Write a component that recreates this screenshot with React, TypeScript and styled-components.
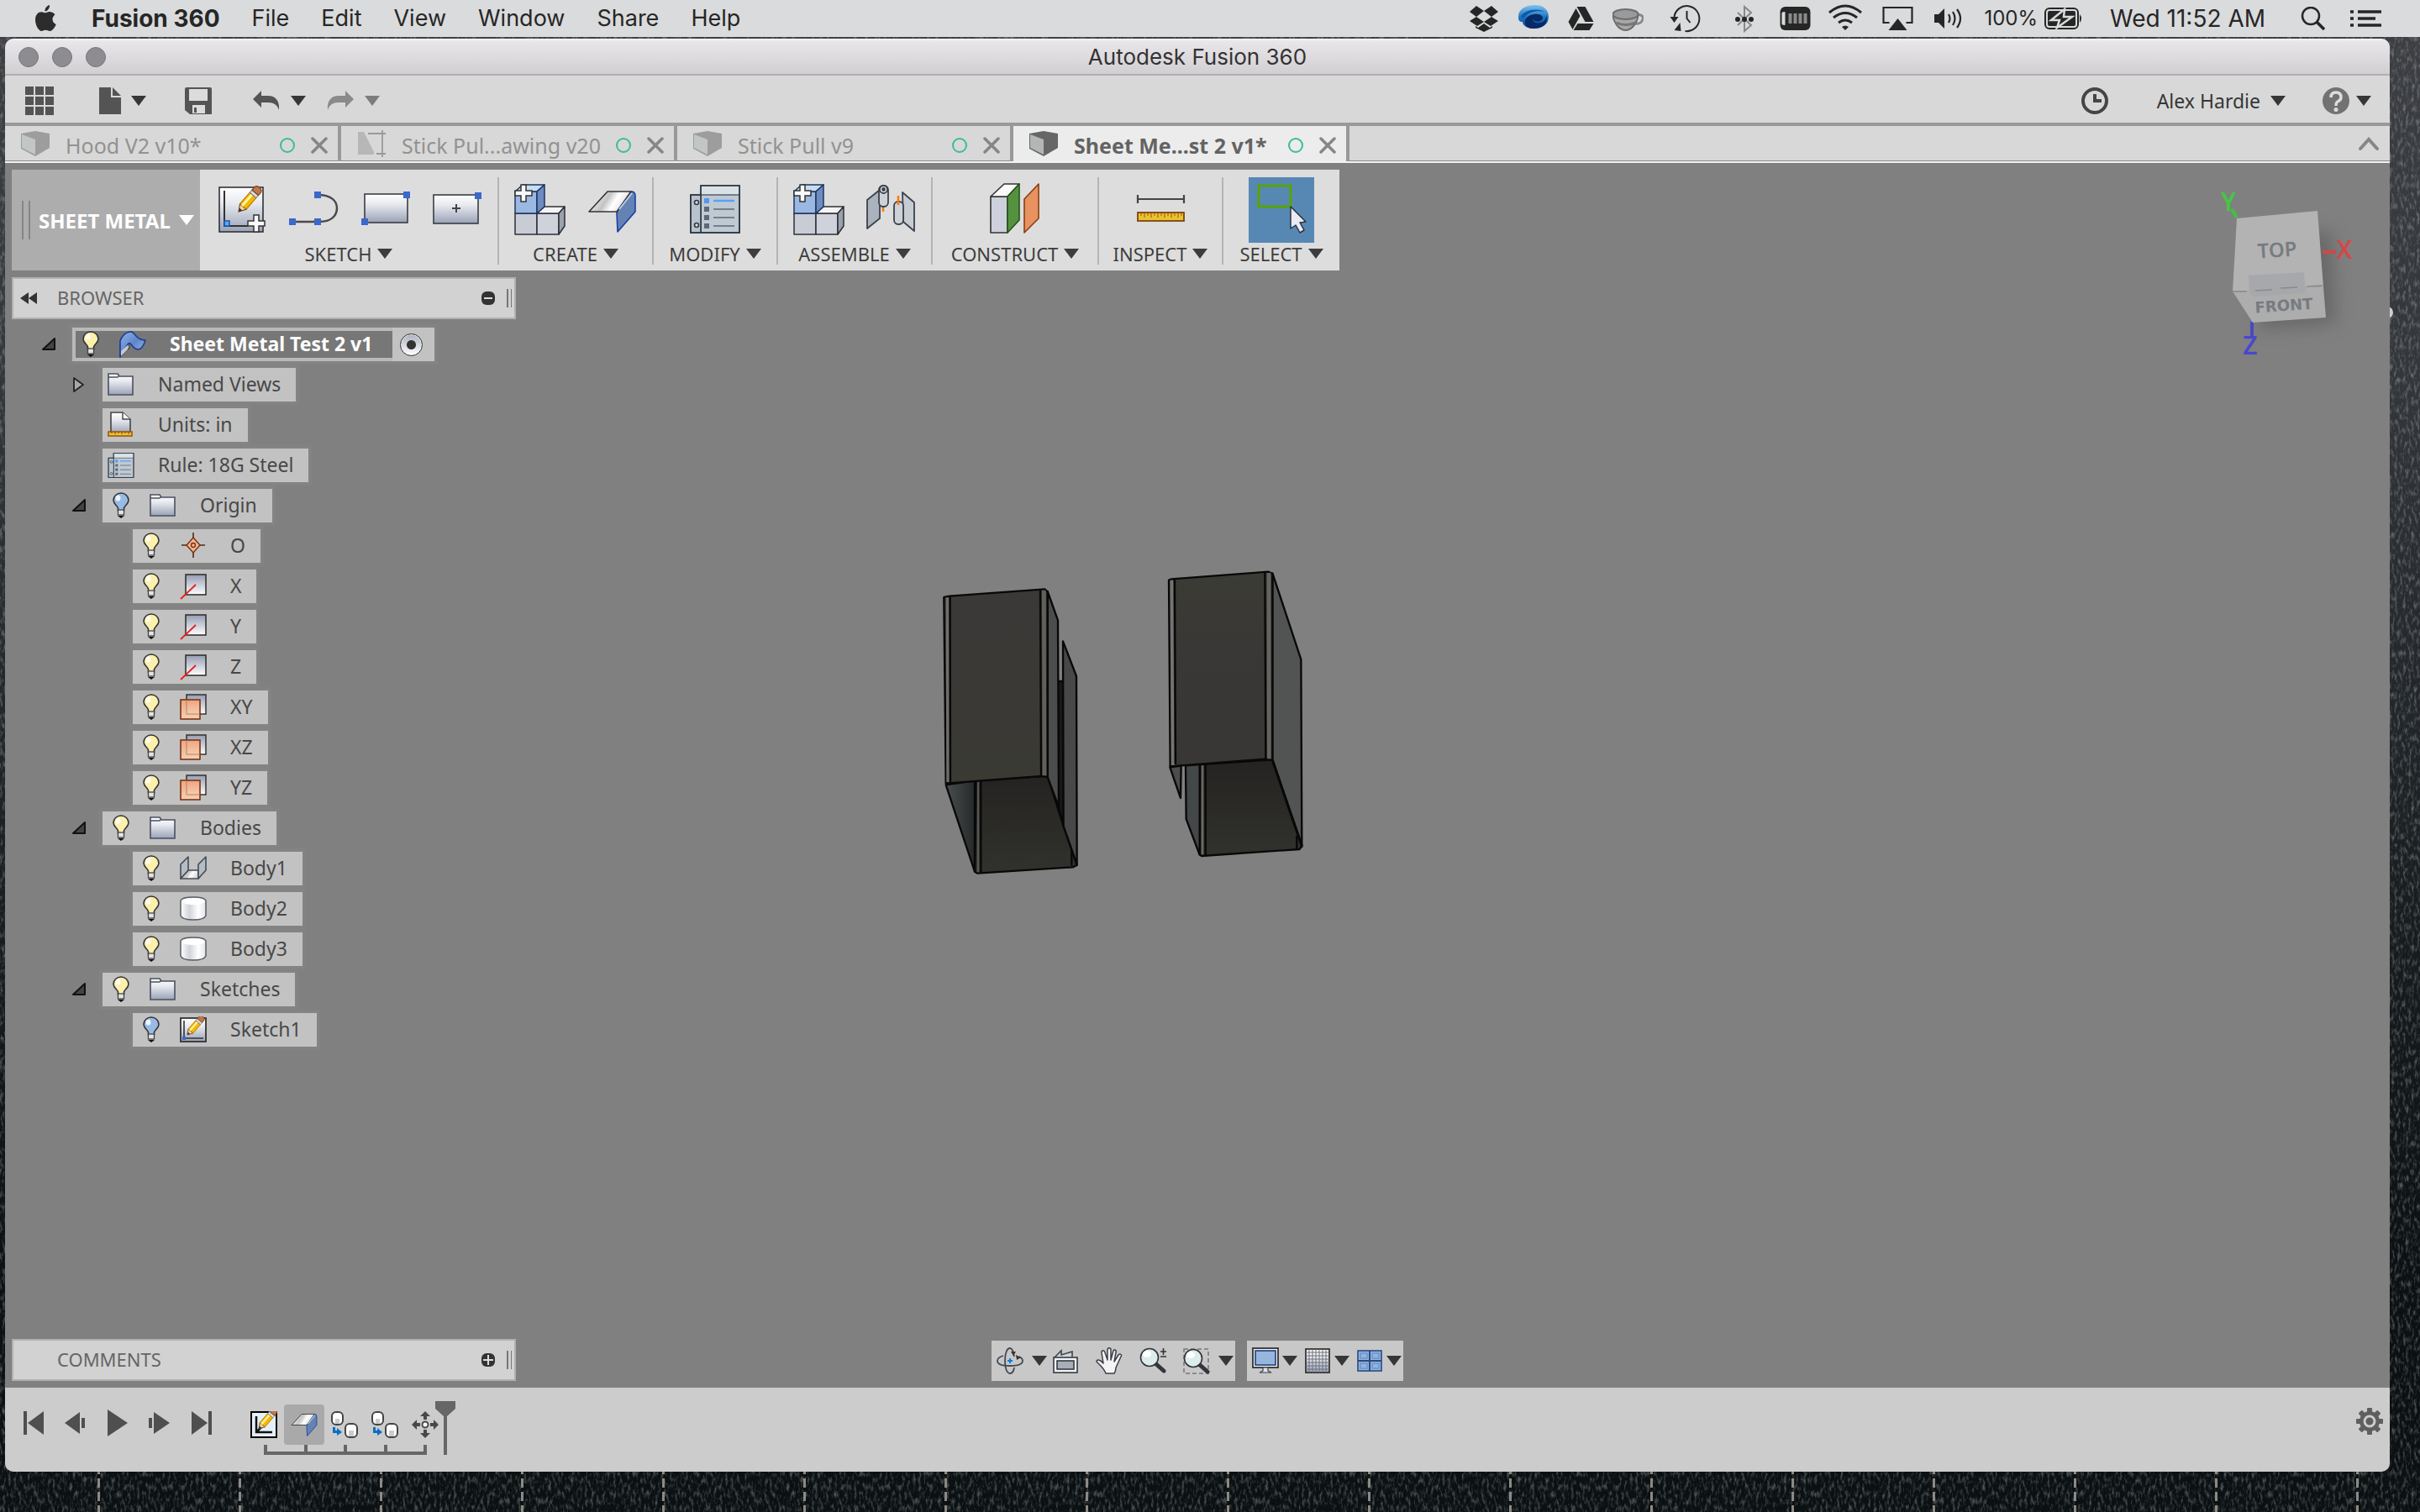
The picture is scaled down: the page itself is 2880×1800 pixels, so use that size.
import React from "react";
import styled, { createGlobalStyle, css } from "styled-components";

const uiFont = `"Noto Sans", "Open Sans", sans-serif`;
const systemFont = `Inter, Roboto, sans-serif`;

const GlobalStyle = createGlobalStyle`
  * { box-sizing: border-box; }
  html, body { margin: 0; }
  body { background: #14191c; font-family: ${uiFont}; font-size: 22px; color: #444; }
  button { appearance: none; border: 0; margin: 0; padding: 0; background: none; color: inherit; font: inherit; cursor: pointer; }
  svg { display: block; flex: none; }
`;

/* ---------- desktop ---------- */

const Desktop = styled.div`
  position: relative;
  isolation: isolate;
  display: flex;
  flex-direction: column;
  min-height: 100vh;
  background: linear-gradient(#3d3f43, #33363a 25%, #181d20 60%, #0b1013 85%);
`;

const Denim = styled.svg`
  position: absolute;
  inset: 0;
  z-index: -1;
  width: 100%;
  height: 100%;
`;

const MenuBar = styled.header`
  display: flex;
  align-items: center;
  height: 44px;
  padding: 0 46px 0 42px;
  background: #dadbdc;
  color: #262626;
  font: 27px/44px ${systemFont};
`;

const MenuList = styled.nav`
  display: flex;
  gap: 38px;
  margin-left: 42px;
`;

const MenuItem = styled.button<{ $bold?: boolean }>`
  font-weight: ${(p) => (p.$bold ? 700 : 400)};
  font-size: ${(p) => (p.$bold ? 28 : 27)}px;
`;

const StatusArea = styled.div`
  display: flex;
  align-items: center;
  gap: 20px;
  margin-left: auto;
`;

const BatteryStatus = styled.div`
  display: flex;
  align-items: center;
  gap: 8px;
  margin: 0 12px 0 6px;
  font-size: 24px;
`;

const Clock = styled.time`
  margin-right: 22px;
  font-size: 28px;
`;

const WindowFrame = styled.main`
  display: flex;
  flex: 1;
  flex-direction: column;
  margin: 2px 36px 48px 6px;
  border-radius: 10px;
  background: #808080;
  overflow: hidden;
`;

const DesktopKnob = styled.div`
  position: absolute;
  z-index: -1;
  top: 365px;
  right: 32px;
  width: 14px;
  height: 14px;
  border-radius: 50%;
  background: #d0d0d0;
`;

/* ---------- title bar and quick toolbar ---------- */

const TitleBar = styled.div`
  display: grid;
  grid-template-columns: 1fr auto 1fr;
  align-items: center;
  height: 44px;
  padding: 2px 16px 0;
  border-bottom: 2px solid #b2adb2;
  background: linear-gradient(#f4f3f4, #e8e6e9 8%, #d2cfd3);
`;

const TrafficLights = styled.div`
  display: flex;
  gap: 16px;
`;

const Light = styled.button`
  width: 24px;
  height: 24px;
  border: 1px solid #77777a;
  border-radius: 50%;
  background: #8d8c91;
`;

const WindowTitle = styled.h1`
  margin: 0;
  color: #333;
  font: 400 26px/40px ${systemFont};
`;

const QuickBar = styled.div`
  display: flex;
  align-items: center;
  height: 60px;
  padding: 4px 22px 0 24px;
  border-bottom: 4px solid #999;
  background: #d8d8d8;
`;

const ToolButton = styled.button<{ $before?: number; $gap?: number; $dim?: boolean }>`
  display: flex;
  align-items: center;
  gap: ${(p) => p.$gap ?? 12}px;
  margin-left: ${(p) => p.$before ?? 0}px;
  color: ${(p) => (p.$dim ? "#7c7c7c" : "#363636")};
  font-size: 23px;
`;

const AccountArea = styled.div`
  display: flex;
  align-items: center;
  margin-left: auto;
`;

/* ---------- document tabs ---------- */

const TabBar = styled.div`
  display: flex;
  height: 44px;
  border-bottom: 2px solid #f2f2f2;
  background: #d8d8d8;
  box-shadow: inset 0 -1px #8a8a8a;
`;

const Tab = styled.div<{ $active?: boolean }>`
  display: flex;
  align-items: center;
  width: 400px;
  padding: 4px 12px 0 18px;
  border-right: 4px solid #999;
  background: ${(p) => (p.$active ? "#ececec" : "transparent")};
  color: ${(p) => (p.$active ? "#636363" : "#929292")};
  font-weight: ${(p) => (p.$active ? 700 : 400)};
  font-size: 25px;
`;

const TabTitle = styled.button`
  display: flex;
  flex: 1;
  align-items: center;
  gap: 18px;
  line-height: 38px;
  white-space: nowrap;
`;

const StatusRing = styled.span`
  width: 18px;
  height: 18px;
  margin-right: 19px;
  border: 2px solid #3dba9c;
  border-radius: 50%;
`;

const CollapseTabs = styled.button`
  margin: 0 12px 0 auto;
`;

/* ---------- canvas ---------- */

const Canvas = styled.section`
  position: relative;
  display: flex;
  flex: 1;
  flex-direction: column;
  align-items: flex-start;
  padding: 8px;
  background: #808080;
`;

const Ribbon = styled.div`
  display: flex;
  height: 120px;
  background: #ddd;
`;

const Workspace = styled.button`
  display: flex;
  align-items: center;
  gap: 10px;
  width: 224px;
  padding-left: 12px;
  background: #adadad;
  color: #fff;
  font-weight: 700;
  font-size: 24px;
  white-space: nowrap;
`;

const Grip = styled.span<{ $h: number }>`
  width: 10px;
  height: ${(p) => p.$h}px;
  border: solid #858585;
  border-width: 0 2px;
`;

const Group = styled.div<{ $w: number }>`
  display: flex;
  flex-direction: column;
  min-width: ${(p) => p.$w}px;
  margin: 9px 0 7px;
  border-right: 2px solid #b4b4b4;
  &:last-child { border-right: 0; }
`;

const GroupIcons = styled.div`
  display: flex;
  justify-content: center;
  gap: 7px;
`;

const IconButton = styled.button<{ $selected?: boolean }>`
  width: 78px;
  height: 78px;
  background: ${(p) => (p.$selected ? "#5788b4" : "transparent")};
`;

const GroupLabel = styled.button`
  display: flex;
  justify-content: center;
  align-items: center;
  gap: 7px;
  color: #3d3d3d;
  line-height: 26px;
`;

const panelBox = css`
  display: flex;
  align-items: center;
  width: 600px;
  height: 50px;
  border: 2px solid #b0b0b0;
  background: #d2d2d2;
  color: #666;
  font-size: 22px;
`;

const PanelBar = styled.div<{ $bottom?: boolean }>`
  ${panelBox}
  margin-top: ${(p) => (p.$bottom ? "auto" : "8px")};
`;

const PanelFold = styled.button`
  width: 52px;
  padding-left: 8px;
`;

const PanelTitle = styled.h2`
  flex: 1;
  margin: 0;
  padding-bottom: 2px;
  font: inherit;
`;

const PanelGrip = styled.span`
  width: 6px;
  height: 22px;
  margin: 0 3px 0 14px;
  border: solid #777;
  border-width: 0 1px 0 2px;
`;

/* ---------- browser tree ---------- */

const Tree = styled.ul`
  display: flex;
  flex-direction: column;
  gap: 8px;
  margin: 10px 0 0;
  padding: 0;
  list-style: none;
`;

const TreeRow = styled.li<{ $level: number }>`
  display: flex;
  align-items: center;
  height: 40px;
  padding-left: ${(p) => 30 + p.$level * 36}px;
`;

const Expander = styled.button`
  width: 42px;
  padding-left: 6px;
`;

const ExpanderSpace = styled.span`
  width: 42px;
`;

const Node = styled.div<{ $root?: boolean }>`
  display: flex;
  align-items: center;
  height: 40px;
  padding-right: ${(p) => (p.$root ? 0 : 18)}px;
  background: #c2c2c2;
  box-shadow: 0 0 3px 4px rgba(255, 255, 255, 0.035);
  color: #484848;
  font-size: 23px;
  ${(p) =>
    p.$root &&
    css`
      border: solid #b9b9b9;
      border-width: 4px 0 4px 4px;
      background: #777;
      color: #fff;
      font-weight: 700;
    `}
`;

const NodeCell = styled.span<{ $first?: boolean }>`
  display: flex;
  justify-content: center;
  width: 44px;
  margin-right: 6px;
  margin-left: ${(p) => (p.$first ? "-4px" : 0)};
`;

const BulbButton = styled(NodeCell).attrs({ as: "button" })``;

const NodeName = styled.span`
  margin-left: 16px;
  padding-bottom: 2px;
  line-height: 30px;
  white-space: nowrap;
`;

const Activate = styled.label`
  display: flex;
  align-items: center;
  width: 50px;
  height: 40px;
  margin: -4px 0 -4px 24px;
  padding-left: 9px;
  background: #c2c2c2;
`;

const ActivateRadio = styled.input`
  appearance: none;
  width: 27px;
  height: 27px;
  margin: 0;
  border: 1px solid #333;
  border-radius: 50%;
  background: radial-gradient(circle, #333 0 5px, transparent 6px), linear-gradient(#aab0c0, #fff);
  box-shadow: inset 0 0 0 1px #eee;
`;

/* ---------- things lying over the canvas ---------- */

const Bodies = styled.svg`
  position: absolute;
  top: 456px;
  left: 1074px;
  width: 520px;
  height: 420px;
`;

const ViewCube = styled.svg`
  position: absolute;
  top: 11px;
  right: 34px;
  width: 190px;
  height: 240px;
`;

const NavBars = styled.div`
  position: absolute;
  right: 0;
  bottom: 8px;
  left: 0;
  display: flex;
  justify-content: center;
  gap: 14px;
  pointer-events: none;
`;

const NavBar = styled.div`
  display: flex;
  align-items: center;
  height: 48px;
  padding: 0 2px 0 6px;
  background: #c8c8c8;
  color: #363636;
  pointer-events: auto;
`;

const NavButton = styled.button<{ $gap?: number; $after?: number }>`
  display: flex;
  align-items: center;
  gap: ${(p) => p.$gap ?? 4}px;
  margin-right: ${(p) => p.$after ?? 0}px;
`;

/* ---------- timeline ---------- */

const Timeline = styled.footer`
  display: flex;
  align-items: flex-start;
  height: 100px;
  padding: 16px 8px 0 9px;
  background: #ccc;
  color: #4f4f51;
`;

const Transport = styled.div`
  display: flex;
  width: 275px;
  padding-top: 10px;
`;

const TransportButton = styled.button`
  display: grid;
  place-items: center;
  width: 50px;
  height: 32px;
`;

const History = styled.div`
  position: relative;
  display: grid;
  grid-template-columns: repeat(5, 48px);
  padding-top: 4px;
`;

const Feature = styled.button<{ $selected?: boolean }>`
  display: grid;
  place-items: center;
  height: 48px;
  border-radius: 4px;
  background: ${(p) => (p.$selected ? "#a9a9a9" : "transparent")};
`;

const Track = styled.div`
  display: flex;
  grid-column: 1 / -1;
  justify-content: space-between;
  height: 12px;
  margin: 0 22px 0 24px;
  border-bottom: 4px solid #666;
`;

const Tick = styled.span`
  width: 4px;
  height: 8px;
  background: #666;
`;

const Marker = styled.svg`
  position: absolute;
  top: 0;
  right: -12px;
`;

const SettingsButton = styled.button`
  margin: 8px 0 0 auto;
`;

/* ---------- shared drawings ---------- */

const Caret = () => (
  <svg width="18" height="12" viewBox="0 0 18 12" aria-hidden="true">
    <path d="M0 0H18L9 12Z" fill="currentColor" />
  </svg>
);

const Gradients = () => (
  <svg width="0" height="0" style={{ position: "absolute" }} aria-hidden="true">
    <defs>
      <linearGradient id="steel" x1="0" y1="0" x2="0" y2="1">
        <stop offset="0" stopColor="#fff" />
        <stop offset=".35" stopColor="#e8eaef" />
        <stop offset="1" stopColor="#99a2b7" />
      </linearGradient>
      <linearGradient id="steelUp" x1="0" y1="1" x2="0" y2="0">
        <stop offset="0" stopColor="#fff" />
        <stop offset="1" stopColor="#949cb2" />
      </linearGradient>
      <linearGradient id="sheen" x1="0" y1="0" x2="1" y2="0.3">
        <stop offset="0" stopColor="#fff" />
        <stop offset=".5" stopColor="#c4c4c4" />
        <stop offset=".7" stopColor="#fff" />
        <stop offset="1" stopColor="#ddd" />
      </linearGradient>
      <linearGradient id="barrel" x1="0" y1="0" x2="1" y2="0">
        <stop offset="0" stopColor="#fff" />
        <stop offset=".35" stopColor="#d2d4da" />
        <stop offset=".7" stopColor="#fff" />
        <stop offset="1" stopColor="#e4e4e8" />
      </linearGradient>
      <linearGradient id="peach" x1="0" y1="0" x2="0" y2="1">
        <stop offset="0" stopColor="#f2a37b" />
        <stop offset="1" stopColor="#fbd2b0" />
      </linearGradient>
      <linearGradient id="blueSheet" x1="0" y1="0" x2="1" y2="1">
        <stop offset="0" stopColor="#8fb3ea" />
        <stop offset=".5" stopColor="#5f86c8" />
        <stop offset="1" stopColor="#a9c3ea" />
      </linearGradient>
      <linearGradient id="swirl" x1="0" y1="0" x2="0" y2="1">
        <stop offset="0" stopColor="#7cc4ee" />
        <stop offset=".5" stopColor="#1f78c4" />
        <stop offset="1" stopColor="#0a3f8c" />
      </linearGradient>
    </defs>
  </svg>
);

const Pencil = ({ x, y, scale = 1 }: { x: number; y: number; scale?: number }) => (
  <g transform={`translate(${x} ${y}) rotate(-49) scale(${scale})`}>
    <path d="M0 0L8-5V5Z" fill="#f3d3a2" stroke="#5a3a10" />
    <path d="M0 0L4-2V2Z" fill="#333" />
    <rect x="8" y="-5" width="18" height="10" fill="#f5b800" stroke="#b06a00" />
    <rect x="8" y="-3" width="18" height="3" fill="#fff3a0" />
    <rect x="26" y="-5" width="4" height="10" fill="#ddd" stroke="#777" />
    <path d="M30-5H34Q38-5 38 0T34 5H30Z" fill="#c07848" stroke="#6d3c1c" />
  </g>
);

const Plus = ({ x, y }: { x: number; y: number }) => (
  <path
    transform={`translate(${x} ${y})`}
    d="M-3-10H3V-3H10V3H3V10H-3V3H-10V-3H-3Z"
    fill="#fafafa"
    stroke="#333"
    strokeWidth="1.5"
  />
);

const Handle = ({ x, y }: { x: number; y: number }) => (
  <rect x={x - 4} y={y - 4} width="8" height="8" fill="#3a68cc" />
);

const RibbonSvg = ({ children }: { children: React.ReactNode }) => (
  <svg width="78" height="78" viewBox="0 0 78 78" aria-hidden="true">
    {children}
  </svg>
);

const SketchIcon = () => (
  <RibbonSvg>
    <rect x="12" y="12" width="52" height="53" fill="url(#steel)" stroke="#2f3238" strokeWidth="1.6" />
    <path d="M18 16V58H46" fill="none" stroke="#333" strokeWidth="2" />
    <rect x="18" y="52" width="6" height="6" fill="#5aa8ff" stroke="#1d57a8" strokeWidth="1.5" />
    <Pencil x={35} y={41} />
    <Plus x={56} y={55} />
  </RibbonSvg>
);
const ArcIcon = () => (
  <RibbonSvg>
    <path d="M14 53H46C60 53 67 46 67 37S60 21 44 21" fill="none" stroke="#4a4a4a" strokeWidth="2.5" />
    <Handle x={44} y={21} />
    <Handle x={14} y={53} />
    <Handle x={44} y={53} />
  </RibbonSvg>
);
const RectIcon = () => (
  <RibbonSvg>
    <rect x="15" y="20" width="51" height="34" fill="url(#steel)" stroke="#3a3d44" strokeWidth="1.6" />
    <Handle x={65} y={21} />
    <Handle x={15} y={53} />
  </RibbonSvg>
);
const CenterRectIcon = () => (
  <RibbonSvg>
    <rect x="12" y="21" width="53" height="34" fill="url(#steel)" stroke="#3a3d44" strokeWidth="1.6" />
    <path d="M34 37H44M39 32V42" stroke="#444" strokeWidth="2" />
    <Handle x={65} y={22} />
  </RibbonSvg>
);
const CubesIcon = () => (
  <RibbonSvg>
    <g strokeLinejoin="round" strokeWidth="1.5" stroke="#2d3036">
      <path d="M9 43H35V68H9Z" fill="#c9ccd5" />
      <path d="M35 43H61V68H35Z" fill="#cfd2da" />
      <path d="M35 43L44 35H68L61 43Z" fill="#f4f4f6" />
      <path d="M61 43L68 35V58L61 68Z" fill="#9aa2ae" />
    </g>
    <g strokeLinejoin="round" strokeWidth="1.5" stroke="#1d3560">
      <path d="M9 17H35V43H9Z" fill="#9bb8e2" />
      <path d="M9 17L18 9H44L35 17Z" fill="#c8dcf2" />
      <path d="M35 17L44 9V35L35 43Z" fill="#6e8cc0" />
    </g>
    <Plus x={19} y={19} />
  </RibbonSvg>
);
const FlangeShape = () => (
  <g strokeLinejoin="round" strokeWidth="1.6">
    <path d="M62 17Q67 17 67 22V41L46 65L45 42Q46 38 50 34Z" fill="#6483b4" stroke="#1a3fa0" />
    <path d="M34 17H62L45 41H12Z" fill="url(#sheen)" stroke="#333" />
    <path d="M63 19L48 38" stroke="#b9cdf0" strokeWidth="2" />
  </g>
);
const FlangeIcon = () => (
  <RibbonSvg>
    <FlangeShape />
  </RibbonSvg>
);
const RulesShape = () => (
  <>
    <g stroke="#2f3a46" strokeWidth="1.6">
      <rect x="22" y="10" width="46" height="56" fill="#bfc9d2" />
      <rect x="22" y="10" width="46" height="11" fill="#dbe2e7" stroke="#5c6873" />
      <rect x="10" y="21" width="12" height="45" fill="#b9c3cd" />
      <path d="M22 10H68V66H10V21H22Z" fill="none" />
      <circle cx="17" cy="30" r="2.5" fill="#ddd" />
      <circle cx="17" cy="57" r="2.5" fill="#ddd" />
    </g>
    <path d="M26 25h6v6h-6z" fill="#5596f5" />
    <path d="M26 35h6v6h-6zM26 45h6v6h-6zM26 55h6v6h-6z" fill="#5d6878" />
    <path d="M37 28H62" stroke="#5aa0ff" strokeWidth="2.5" />
    <path d="M37 38H62M37 48H62M37 58H62" stroke="#5d6878" strokeWidth="1.6" />
  </>
);
const RulesIcon = () => (
  <RibbonSvg>
    <RulesShape />
  </RibbonSvg>
);
const JointIcon = () => (
  <RibbonSvg>
    <g stroke="#3b424c" strokeWidth="1.8" strokeLinejoin="round">
      <path d="M30 34V41" stroke="#ff7a00" strokeWidth="2.5" />
      <path d="M11 27L26 15V49L11 61Z" fill="#a9b2bd" />
      <path d="M53 18L67 30V64L54 53Z" fill="#c6ccd4" />
      <rect x="25" y="10" width="11" height="25" rx="5" fill="#cdd2d8" />
      <circle cx="30.500" cy="14.500" r="4.500" fill="#f0f0f0" />
      <circle cx="30.500" cy="14.500" r="1.500" fill="#333" />
      <rect x="43" y="29" width="11" height="27" rx="5" fill="#cdd2d8" />
      <path d="M48 22V33" stroke="#ff7a00" strokeWidth="2.5" />
    </g>
  </RibbonSvg>
);
const PlaneIcon = () => (
  <RibbonSvg>
    <g strokeWidth="1.6" strokeLinejoin="round">
      <path d="M10 23H30V66H10Z" fill="#ced1dc" stroke="#333" />
      <path d="M10 23L26 8H44L30 23Z" fill="#fafafa" stroke="#333" />
      <path d="M30 23L44 8V51L30 66Z" fill="#55923f" stroke="#28521c" />
      <path d="M50 26L67 8V49L50 66Z" fill="#e8935f" stroke="#8a3c14" />
    </g>
  </RibbonSvg>
);
const MeasureIcon = () => (
  <RibbonSvg>
    <path d="M12 26H67M12 21V31M67 21V31" stroke="#444" strokeWidth="2.2" />
    <rect x="12" y="42" width="55" height="10" fill="#ecc130" stroke="#7d4410" strokeWidth="1.8" />
    <path d="M16 43V46M20 43V48M24 43V46M28 43V48M32 43V46M36 43V48M40 43V46M44 43V48M48 43V46M52 43V48M56 43V46M60 43V48M64 43V46" stroke="#8a5a10" />
  </RibbonSvg>
);
const SelectIcon = () => (
  <RibbonSvg>
    <rect x="12" y="10" width="38" height="25" fill="none" stroke="#58a300" strokeWidth="3" />
    <path d="M50 35V61L56 57L61 66L66 63L61 54L68 53Z" fill="#e8ecf2" stroke="#2a3442" strokeWidth="1.5" strokeLinejoin="round" />
  </RibbonSvg>
);

/* ---------- 32px icons ---------- */

const Small = ({ children }: { children: React.ReactNode }) => (
  <svg width="32" height="32" viewBox="0 0 32 32" aria-hidden="true">
    {children}
  </svg>
);

const Bulb = ({ on }: { on: boolean }) => (
  <Small>
    <path d="M12.500 22V19C12 16 7 14 7 9.500A9 8.500 0 0 1 25 9.500C25 14 20 16 19.500 19V22Z" fill={on ? "#fdf0ac" : "#97bbe4"} stroke="#333" strokeWidth="1.6" />
    <ellipse cx="12.500" cy="7" rx="3" ry="3.500" fill="#fff" opacity=".85" />
    <rect x="12.500" y="21" width="7" height="6" fill="#e4e4e4" stroke="#444" strokeWidth="1.3" />
    <path d="M12 28H20L16 31Z" fill="#111" />
  </Small>
);

const FolderIcon = () => (
  <Small>
    <path d="M1 28V3H12L14 6H30V28Z" fill="url(#steel)" stroke="#4a5060" strokeWidth="1.6" />
    <path d="M1 7H12L14 5" fill="none" stroke="#4a5060" strokeWidth="1.3" />
  </Small>
);
const UnitsIcon = () => (
  <Small>
    <path d="M4 1H18L27 9V26H4Z" fill="url(#steel)" stroke="#444" strokeWidth="1.6" />
    <path d="M18 1V9H27" fill="#fff" stroke="#444" strokeWidth="1.4" />
    <rect x="1" y="24" width="28" height="5" fill="#ecc130" stroke="#9a5a10" strokeWidth="1.6" />
    <path d="M5 24v2M9 24v3M13 24v2M17 24v3M21 24v2M25 24v3" stroke="#7d4410" />
  </Small>
);
const RuleIcon = () => (
  <svg width="32" height="32" viewBox="8 8 62 60" aria-hidden="true">
    <RulesShape />
  </svg>
);
const OriginIcon = () => (
  <Small>
    <path d="M16 0V30M2 15H30" stroke="#5a2a12" strokeWidth="1.6" />
    <path d="M16 6L24 15L16 24L8 15Z" fill="#f7b28c" stroke="#6b3216" strokeWidth="1.4" />
    <circle cx="16" cy="15" r="2.500" fill="none" stroke="#6b3216" strokeWidth="1.3" />
  </Small>
);
const AxisIcon = () => (
  <Small>
    <rect x="7" y="2" width="24" height="24" fill="url(#steelUp)" stroke="#333" strokeWidth="1.6" />
    <path d="M1 31L19 14" stroke="#e8201c" strokeWidth="1.8" />
  </Small>
);
const PlaneSmallIcon = () => (
  <Small>
    <rect x="8" y="1" width="23" height="23" fill="url(#steelUp)" stroke="#333" strokeWidth="1.5" />
    <rect x="1" y="7" width="23" height="23" fill="url(#peach)" fillOpacity=".9" stroke="#7d3312" strokeWidth="1.6" />
    <path d="M8 7V24H24" fill="none" stroke="#a98472" opacity=".7" />
  </Small>
);
const SheetBodyIcon = () => (
  <Small>
    <g stroke="#454b55" strokeWidth="1.6" strokeLinejoin="round">
      <path d="M1 28L10 18H22V28Z" fill="url(#sheen)" />
      <path d="M1 11L10 2V18L1 28Z" fill="#b4bcc6" />
      <path d="M22 11L31 2V18L22 28Z" fill="#b4bcc6" />
    </g>
  </Small>
);
const SolidBodyIcon = () => (
  <Small>
    <path d="M1 6V24Q3 29 16 29T31 24V6Q29 2 16 2T1 6Z" fill="url(#barrel)" stroke="#5a5d66" strokeWidth="1.5" />
    <path d="M2 7Q4 11 16 11T30 7Q28 3 16 3T2 7Z" fill="#fff" />
  </Small>
);
const SketchSmallIcon = () => (
  <Small>
    <rect x="1" y="2" width="30" height="28" fill="url(#steel)" stroke="#333" strokeWidth="1.8" />
    <path d="M5 5V26H28" fill="none" stroke="#333" strokeWidth="1.6" />
    <rect x="3" y="24" width="4" height="4" fill="#3a68cc" />
    <Pencil x={9} y={22} scale={0.75} />
  </Small>
);
const ComponentIcon = () => (
  <Small>
    <path d="M1 13L11 12L12 20L1 31Z" fill="#b9c1c9" stroke="#444" strokeWidth="1.2" />
    <path d="M1 31V12Q4 3 12 1Q16 0 19 5Q24 11 31 11Q28 21 23 22Q18 22 14 16Q12 13 10 16Z" fill="url(#blueSheet)" stroke="#1d3f8f" strokeWidth="1.6" strokeLinejoin="round" />
    <path d="M2 24L10 17V22L2 30Z" fill="#c4cad0" />
  </Small>
);

type TreeNode = { name: string; level: number; open?: boolean; bulb?: boolean; icon: () => React.ReactElement };

const nodes: TreeNode[] = [
  { name: "Named Views", level: 1, open: false, icon: FolderIcon },
  { name: "Units: in", level: 1, icon: UnitsIcon },
  { name: "Rule: 18G Steel", level: 1, icon: RuleIcon },
  { name: "Origin", level: 1, open: true, bulb: false, icon: FolderIcon },
  { name: "O", level: 2, bulb: true, icon: OriginIcon },
  { name: "X", level: 2, bulb: true, icon: AxisIcon },
  { name: "Y", level: 2, bulb: true, icon: AxisIcon },
  { name: "Z", level: 2, bulb: true, icon: AxisIcon },
  { name: "XY", level: 2, bulb: true, icon: PlaneSmallIcon },
  { name: "XZ", level: 2, bulb: true, icon: PlaneSmallIcon },
  { name: "YZ", level: 2, bulb: true, icon: PlaneSmallIcon },
  { name: "Bodies", level: 1, open: true, bulb: true, icon: FolderIcon },
  { name: "Body1", level: 2, bulb: true, icon: SheetBodyIcon },
  { name: "Body2", level: 2, bulb: true, icon: SolidBodyIcon },
  { name: "Body3", level: 2, bulb: true, icon: SolidBodyIcon },
  { name: "Sketches", level: 1, open: true, bulb: true, icon: FolderIcon },
  { name: "Sketch1", level: 2, bulb: false, icon: SketchSmallIcon },
];

const ExpanderMark = ({ open }: { open: boolean }) => (
  <svg width="18" height="20" viewBox="0 0 18 20" aria-hidden="true">
    {open ? (
      <path d="M1 16L15 3V16Z" fill="#444" stroke="#111" strokeWidth="2" strokeLinejoin="round" />
    ) : (
      <path d="M2 2V18L13 10Z" fill="#a8a8a8" stroke="#222" strokeWidth="1.8" strokeLinejoin="round" />
    )}
  </svg>
);

const BrowserTree = () => (
  <Tree>
    <TreeRow $level={0}>
      <Expander aria-label="Collapse Sheet Metal Test 2 v1">
        <ExpanderMark open />
      </Expander>
      <Node $root>
        <BulbButton $first aria-label="Toggle visibility">
          <Bulb on />
        </BulbButton>
        <NodeCell>
          <ComponentIcon />
        </NodeCell>
        <NodeName>Sheet Metal Test 2 v1</NodeName>
        <Activate>
          <ActivateRadio type="radio" name="active-component" defaultChecked aria-label="Activate component" />
        </Activate>
      </Node>
    </TreeRow>
    {nodes.map((n) => (
      <TreeRow key={n.name} $level={n.level}>
        {n.open === undefined ? (
          <ExpanderSpace />
        ) : (
          <Expander aria-label={`${n.open ? "Collapse" : "Expand"} ${n.name}`}>
            <ExpanderMark open={n.open} />
          </Expander>
        )}
        <Node>
          {n.bulb !== undefined && (
            <BulbButton aria-label={`Toggle ${n.name}`}>
              <Bulb on={n.bulb} />
            </BulbButton>
          )}
          <NodeCell>
            <n.icon />
          </NodeCell>
          <NodeName>{n.name}</NodeName>
        </Node>
      </TreeRow>
    ))}
  </Tree>
);

/* ---------- ribbon ---------- */

const groups: { label: string; width: number; icons: [string, () => React.ReactElement][] }[] = [
  { label: "SKETCH", width: 356, icons: [["Create sketch", SketchIcon], ["Line", ArcIcon], ["Two-point rectangle", RectIcon], ["Center rectangle", CenterRectIcon]] },
  { label: "CREATE", width: 184, icons: [["New component", CubesIcon], ["Flange", FlangeIcon]] },
  { label: "MODIFY", width: 148, icons: [["Sheet metal rules", RulesIcon]] },
  { label: "ASSEMBLE", width: 184, icons: [["Assemble component", CubesIcon], ["Joint", JointIcon]] },
  { label: "CONSTRUCT", width: 198, icons: [["Offset plane", PlaneIcon]] },
  { label: "INSPECT", width: 148, icons: [["Measure", MeasureIcon]] },
  { label: "SELECT", width: 138, icons: [["Select", SelectIcon]] },
];

const RibbonBar = () => (
  <Ribbon>
    <Workspace>
      <Grip $h={46} />
      <span>SHEET METAL</span>
      <Caret />
    </Workspace>
    {groups.map((g) => (
      <Group key={g.label} $w={g.width}>
        <GroupIcons>
          {g.icons.map(([name, Icon]) => (
            <IconButton key={name} aria-label={name} $selected={name === "Select"}>
              <Icon />
            </IconButton>
          ))}
        </GroupIcons>
        <GroupLabel>
          {g.label}
          <Caret />
        </GroupLabel>
      </Group>
    ))}
  </Ribbon>
);

/* ---------- tabs ---------- */

const CubeTabIcon = ({ active }: { active?: boolean }) => (
  <svg width="36" height="38" viewBox="0 3 36 38" aria-hidden="true">
    <path d="M1 8L18 5L35 8V25L18 35L1 26Z" fill={active ? "#666" : "#9d9d9d"} />
    <path d="M2 9L18 15V33L2 25Z" fill={active ? "#b3b6b6" : "#c3c6c6"} />
  </svg>
);
const DrawingTabIcon = () => (
  <svg width="36" height="38" viewBox="0 3 36 38" aria-hidden="true">
    <path d="M2 6H9L21 30V33H2Z" fill="#b6b7b9" />
    <path d="M14 8H35M31 4V36M24 32H35" stroke="#999" strokeWidth="1.8" />
  </svg>
);

const tabs = [
  { title: "Hood V2 v10*", icon: <CubeTabIcon /> },
  { title: "Stick Pul...awing v20", icon: <DrawingTabIcon /> },
  { title: "Stick Pull v9", icon: <CubeTabIcon /> },
  { title: "Sheet Me...st 2 v1*", icon: <CubeTabIcon active />, active: true },
];

const DocumentTabs = () => (
  <TabBar>
    {tabs.map((t) => (
      <Tab key={t.title} $active={t.active}>
        <TabTitle>
          {t.icon}
          {t.title}
        </TabTitle>
        <StatusRing />
        <button aria-label={`Close ${t.title}`}>
          <svg width="20" height="20" viewBox="0 0 20 20">
            <path d="M2 2L18 18M18 2L2 18" stroke="#85858b" strokeWidth="3.5" strokeLinecap="round" />
          </svg>
        </button>
      </Tab>
    ))}
    <CollapseTabs aria-label="Collapse">
      <svg width="26" height="18" viewBox="0 0 26 18">
        <path d="M3 15L13 4L23 15" fill="none" stroke="#85858b" strokeWidth="4" strokeLinecap="round" />
      </svg>
    </CollapseTabs>
  </TabBar>
);

/* ---------- quick toolbar ---------- */

const UndoIcon = ({ flip }: { flip?: boolean }) => (
  <svg width="34" height="24" viewBox="0 0 34 24" aria-hidden="true">
    <path
      transform={flip ? "translate(34 0) scale(-1 1)" : undefined}
      d="M1 10L11 0V6H19C28 6 33 12 32 23C30 17 26 14 19 14H11V20Z"
      fill={flip ? "#8a8a8a" : "#545454"}
    />
  </svg>
);

const QuickToolbar = () => (
  <QuickBar>
    <ToolButton aria-label="Data panel">
      <svg width="34" height="34" viewBox="0 0 34 34">
        <path d="M0 0h10v10H0zM12 0h10v10H12zM24 0h10v10H24zM0 12h10v10H0zM12 12h10v10H12zM24 12h10v10H24zM0 24h10v10H0zM12 24h10v10H12zM24 24h10v10H24z" fill="#545454" />
      </svg>
    </ToolButton>
    <ToolButton $before={54} aria-label="File">
      <svg width="26" height="32" viewBox="0 0 26 32">
        <path d="M0 0H14V12H26V32H0ZM16 0L26 10H16Z" fill="#545454" />
      </svg>
      <Caret />
    </ToolButton>
    <ToolButton $before={46} aria-label="Save">
      <svg width="32" height="32" viewBox="0 0 32 32">
        <path d="M0 2Q0 0 2 0H30Q32 0 32 2V32H6L0 27Z" fill="#545454" />
        <path d="M5 2H27V16H5ZM9 21H24V31H9Z" fill="#dcdcdc" />
        <path d="M11 24H14V30H11Z" fill="#545454" />
      </svg>
    </ToolButton>
    <ToolButton $before={48} aria-label="Undo">
      <UndoIcon />
      <Caret />
    </ToolButton>
    <ToolButton $before={24} $dim aria-label="Redo">
      <UndoIcon flip />
      <Caret />
    </ToolButton>
    <AccountArea>
      <ToolButton aria-label="Job status">
        <svg width="32" height="32" viewBox="0 0 32 32">
          <circle cx="16" cy="16" r="14" fill="none" stroke="#454545" strokeWidth="4" />
          <path d="M16 8V16H24" fill="none" stroke="#454545" strokeWidth="4" />
        </svg>
      </ToolButton>
      <ToolButton $before={58}>
        Alex Hardie
        <Caret />
      </ToolButton>
      <ToolButton $before={44} $gap={8} aria-label="Help">
        <svg width="32" height="32" viewBox="0 0 32 32">
          <circle cx="16" cy="16" r="16" fill="#727272" />
          <path d="M10 12Q10 6 16 6T22 12Q22 15 18 17Q16 18 16 22" fill="none" stroke="#dcdcdc" strokeWidth="3.5" />
          <circle cx="16" cy="26.500" r="2.500" fill="#dcdcdc" />
        </svg>
        <Caret />
      </ToolButton>
    </AccountArea>
  </QuickBar>
);

/* ---------- menu bar ---------- */

const StatusIcon = ({ w, label, children }: { w: number; label: string; children: React.ReactNode }) => (
  <button aria-label={label}>
    <svg width={w} height="44" viewBox={`${-w / 2} 0 ${w} 44`}>
      {children}
    </svg>
  </button>
);

const SystemMenu = () => (
  <MenuBar>
    <button aria-label="Apple menu">
      <svg width="25" height="32" viewBox="0 0 25 32">
        <path d="M17 0C17.500 4 14 7.500 11.500 7.500C11 4 14 .5 17 0ZM20.500 17C20.500 13.500 23.500 11.500 23.500 11.500C21 8 17.500 8 16.500 8C14.500 8 13 9.300 12 9.300C10.500 9.300 9.500 8.200 7.200 8.200C3.500 8.200 0 11.500 0 17.500C0 24 4 31 7.500 31C9.300 31 10 29.800 12.300 29.800C14.800 29.800 15.200 31 17.200 31C21 31 24.500 24 24.700 23C22.500 22 20.500 20 20.500 17Z" fill="#2c2c2c" />
      </svg>
    </button>
    <MenuList>
      {["Fusion 360", "File", "Edit", "View", "Window", "Share", "Help"].map((m, i) => (
        <MenuItem key={m} $bold={i === 0}>
          {m}
        </MenuItem>
      ))}
    </MenuList>
    <StatusArea>
      <StatusIcon w={40} label="Dropbox">
        <path d="M-9 7L0 13L-9 20L-17 14ZM9 7L17 14L9 20L0 13ZM-9 20L0 26L-8 31L-17 25ZM9 20L17 25L8 31L0 26ZM0 28L7 33L10 31V33L0 38L-10 33V31L-7 33Z" fill="#262626" />
      </StatusIcon>
      <StatusIcon w={38} label="Sync">
        <path d="M-18 20C-18 10-8 6 2 6C12 6 18 12 18 20C18 30 9 34 0 34C-8 34-13 30-13 26C-17 26-18 24-18 20Z" fill="url(#swirl)" />
        <path d="M-10 24C-8 16 10 14 11 21C11 26 2 27-1 23C0 30 16 29 15 18C19 30 8 34 0 34C-8 34-11 29-10 24Z" fill="#062a66" />
        <path d="M-15 20C-12 12 4 9 13 14C4 12-6 14-12 22Z" fill="#0f5aa8" />
      </StatusIcon>
      <StatusIcon w={35} label="Drive">
        <path d="M-5 8H5L15 26H5ZM-6 10L-1 19L-10 35L-15 26ZM-4 28H15L10 36H-9Z" fill="#262626" />
      </StatusIcon>
      <StatusIcon w={37} label="Caffeine">
        <path d="M11 17Q20 18 17 24Q15 29 8 28" fill="none" stroke="#8a8a8a" strokeWidth="3" />
        <path d="M-18 17C-18 24-12 36-3 36S12 24 12 17Z" fill="#a8a8a8" stroke="#6c6c6c" strokeWidth="2" />
        <ellipse cx="-3" cy="17" rx="15" ry="6" fill="#9a9a9a" stroke="#6c6c6c" strokeWidth="2" />
        <path d="M-14 27Q-3 32 9 27" fill="none" stroke="#777" strokeWidth="3" />
      </StatusIcon>
      <StatusIcon w={59} label="Time Machine">
        <path d="M-13 20A15 15 0 1 1 0 37" fill="none" stroke="#262626" strokeWidth="2" />
        <path d="M-18 20H-8L-13 27ZM-13 36L-6 27L-5 37Z" fill="#262626" />
        <path d="M2 13V22L6 27" fill="none" stroke="#262626" strokeWidth="2" />
      </StatusIcon>
      <StatusIcon w={42} label="Bluetooth">
        <path d="M-8 15L8 30L0 37V8L8 15L-8 30" fill="none" stroke="#888" strokeWidth="2" />
        <circle cx="-8" cy="23" r="3" fill="#262626" />
        <circle cx="0" cy="23" r="3" fill="#262626" />
        <circle cx="8" cy="23" r="3" fill="#262626" />
      </StatusIcon>
      <StatusIcon w={39} label="Memory">
        <rect x="-18" y="8" width="36" height="28" rx="6" fill="#262626" />
        <path d="M-16 15Q-12 13-12 15V29Q-12 31-16 29Z" fill="#dadbdc" />
        <path d="M-8 16H-4V28H-8ZM-2 16H2V28H-2ZM4 16H8V28H4ZM10 16H14V28H10Z" fill="#8a8a8a" />
      </StatusIcon>
      <StatusIcon w={40} label="Wi-Fi">
        <path d="M-19 15Q0-1 19 15M-14 21Q0 10 14 21M-8 27Q0 21 8 27" fill="none" stroke="#262626" strokeWidth="3" />
        <path d="M-4 32Q0 29 4 32L0 36Z" fill="#262626" />
      </StatusIcon>
      <StatusIcon w={45} label="AirPlay">
        <path d="M-10 27H-17V9H17V27H10" fill="none" stroke="#262626" strokeWidth="2.2" />
        <path d="M0 22L11 36H-11Z" fill="#262626" />
      </StatusIcon>
      <StatusIcon w={34} label="Volume">
        <path d="M-16 17H-11L-4 10V34L-11 27H-16Z" fill="#262626" />
        <path d="M1 17Q4 22 1 27M6 14Q11 22 6 30M11 11Q19 22 11 33" fill="none" stroke="#262626" strokeWidth="2.2" />
      </StatusIcon>
      <BatteryStatus>
        100%
        <svg width="46" height="26" viewBox="0 0 46 26" aria-hidden="true">
          <rect x="1" y="1" width="39" height="24" rx="5" fill="none" stroke="#262626" strokeWidth="2" />
          <rect x="4" y="4" width="33" height="18" rx="2" fill="#262626" />
          <path d="M42 8Q46 13 42 18Z" fill="#262626" />
          <path d="M24 2L8 15H18L15 24L33 11H23Z" fill="#262626" stroke="#dadbdc" strokeWidth="2.5" />
        </svg>
      </BatteryStatus>
      <Clock>Wed 11:52 AM</Clock>
      <button aria-label="Spotlight">
        <svg width="30" height="28" viewBox="0 0 30 28">
          <circle cx="12" cy="11" r="10" fill="none" stroke="#262626" strokeWidth="2.5" />
          <path d="M19 18L28 27" stroke="#262626" strokeWidth="3.500" />
        </svg>
      </button>
      <button aria-label="Notification Center">
        <svg width="46" height="20" viewBox="-9 0 46 20">
          <path d="M0 2H4M0 10H4M0 18H4M9 2H37M9 10H30M9 18H37" stroke="#262626" strokeWidth="3.500" />
        </svg>
      </button>
    </StatusArea>
  </MenuBar>
);

/* ---------- model ---------- */

const Model = () => (
  <Bodies viewBox="0 0 1560 1260" aria-label="Sheet metal bodies">
    <defs>
      <linearGradient id="wallA" x1="0" y1="0" x2="1" y2="0">
        <stop offset="0" stopColor="#4a4e4e" />
        <stop offset="1" stopColor="#262929" />
      </linearGradient>
      <linearGradient id="frontA" x1="0" y1="0" x2="0" y2="1">
        <stop offset="0" stopColor="#3b3937" />
        <stop offset=".65" stopColor="#3a3936" />
        <stop offset="1" stopColor="#3a3a33" />
      </linearGradient>
      <linearGradient id="frontB" x1="0" y1="0" x2="0" y2="1">
        <stop offset="0" stopColor="#3b3b35" />
        <stop offset=".4" stopColor="#3a3836" />
        <stop offset="1" stopColor="#393735" />
      </linearGradient>
      <linearGradient id="floor" x1="0" y1="0" x2="0" y2="1">
        <stop offset="0" stopColor="#242321" />
        <stop offset="1" stopColor="#31312d" />
      </linearGradient>
    </defs>
    <g stroke="#080808" strokeWidth="7" strokeLinejoin="round">
      <path d="M245 838L500 820L557 1000L605 1140L590 1147L250 1169L240 1163Z" fill="url(#floor)" />
      <path d="M137 853L240 838V1163Z" fill="url(#wallA)" />
      <path d="M252 840V1165" stroke="#555" strokeWidth="7" />
      <path d="M262 840V1166" />
      <path d="M537 483H557V1000L540 935Z" fill="#191919" />
      <path d="M555 340L603 465L605 1138L557 1000Z" fill="#484848" />
      <path d="M586 1085V1142" />
      <path d="M500 162L537 265L540 932L500 825Z" fill="#4a4d4c" />
      <path d="M130 183L150 179L490 154L500 164V825L480 822L137 848Z" fill="url(#frontA)" />
      <path d="M142 184L144 843" stroke="#6e6e6c" strokeWidth="10" />
      <path d="M152 180L153 843M474 157L477 822" />
      <path d="M487 158L489 820" stroke="#62605d" strokeWidth="14" />
    </g>
    <g stroke="#080808" strokeWidth="7" strokeLinejoin="round">
      <path d="M1303 97L1405 405L1408 1075L1303 765Z" fill="#515452" />
      <path d="M1045 780L1303 763L1408 1070L1400 1083L1050 1107L1042 1100Z" fill="url(#floor)" />
      <path d="M993 784L1043 780V1103L995 975Z" fill="#444747" />
      <path d="M1053 784V1102" stroke="#6a6866" strokeWidth="8" />
      <path d="M1064 783V1104M1390 1035V1082" />
      <path d="M937 790L977 785L975 900Z" fill="#4b4d4c" />
      <path d="M933 122L943 118L1288 92L1303 99V765L1285 760L938 787Z" fill="url(#frontB)" />
      <path d="M943 122L947 783" stroke="#747472" strokeWidth="11" />
      <path d="M954 119L957 779M1276 95L1279 760" />
      <path d="M1290 96L1291 760" stroke="#65635f" strokeWidth="14" />
      <path d="M1303 765L1408 1072" strokeWidth="9" />
    </g>
  </Bodies>
);

const Cube = () => (
  <ViewCube viewBox="2620 205 190 240" aria-label="View cube">
    <defs>
      <filter id="cubeShadow" x="-50%" y="-50%" width="200%" height="200%">
        <feGaussianBlur stdDeviation="10" />
      </filter>
    </defs>
    <path d="M2680 285L2775 275L2780 385L2690 392Z" fill="#555" opacity=".55" filter="url(#cubeShadow)" />
    <path d="M2656 249L2662 259" stroke="#3fc23f" strokeWidth="4" />
    <path d="M2764 300H2780" stroke="#d04848" strokeWidth="4" />
    <path d="M2680 383V401" stroke="#4a4ac4" strokeWidth="4" />
    <path d="M2662 260L2758 251L2765 341L2657 347Z" fill="#b3b3b3" />
    <path d="M2657 347L2765 341L2768 378L2681 384Z" fill="#adadad" />
    <path d="M2676 328L2742 324L2744 349L2682 353L2677 347Z" fill="#a6a8ab" />
    <path d="M2657 347H2674M2684 346L2704 345M2714 343L2734 342M2745 341L2764 340" stroke="#888b8e" strokeWidth="1.500" />
    <g fontFamily="Noto Sans, sans-serif" textAnchor="middle">
      <text x="2710" y="306" fontSize="24" fontWeight="600" fill="#777c82" transform="rotate(-4 2710 297)">TOP</text>
      <text x="2718" y="370" fontSize="18" fontWeight="700" fontFamily="DejaVu Sans, sans-serif" fill="#777b80" transform="rotate(-4 2718 364)">FRONT</text>
      <g fontSize="30" fontWeight="600">
        <text x="2652" y="251" fill="#46c546">Y</text>
        <text x="2790" y="308" fill="#d04a4a">X</text>
        <text x="2678" y="422" fill="#4848cc">Z</text>
      </g>
    </g>
  </ViewCube>
);

/* ---------- navigation bars ---------- */

const MagnifierShape = ({ cy = 13 }: { cy?: number }) => (
  <g>
    <path d={`M20 ${cy + 8}L29 ${cy + 16}`} stroke="#33363c" strokeWidth="5" strokeLinecap="round" />
    <circle cx="12" cy={cy} r="10.500" fill="#dcebeb" stroke="#333" strokeWidth="1.6" />
    <ellipse cx="9" cy={cy - 4} rx="5" ry="4" fill="#fff" />
  </g>
);

const NavigationBars = () => (
  <NavBars>
    <NavBar>
      <NavButton $gap={10} $after={6} aria-label="Orbit">
        <Small>
          <g fill="none" stroke="#444a54" strokeWidth="1.8">
            <path d="M21 11C20 5 18 1 16 1C12 1 10 8 10 16S12 31 16 31Q20 31 21 24" />
            <path d="M8 10Q1 12 1 16Q1 22 16 22Q31 22 31 16Q31 13 27 11" />
          </g>
          <path d="M17 5L23 5L20 10ZM23 9L29 12L24 15Z" fill="#333" />
          <path d="M13 16H19M16 13V19" stroke="#0a7de0" strokeWidth="2" />
        </Small>
        <Caret />
      </NavButton>
      <NavButton $after={20} aria-label="Look at">
        <Small>
          <path d="M3 12L11 4V9L24 5V11" fill="#d0d4da" stroke="#3c424c" strokeWidth="1.6" />
          <rect x="2" y="12" width="28" height="18" fill="#f4f5f7" stroke="#333a44" strokeWidth="1.6" />
          <rect x="6" y="16" width="20" height="10" fill="#a8adb6" stroke="#333a44" strokeWidth="1.6" />
        </Small>
      </NavButton>
      <NavButton $after={20} aria-label="Pan">
        <Small>
          <path d="M12 31C10 25 4 20 1 17C1 14 5 14 9 19L7 6C7 3 10 3 11 6L14 15L14 3C14 0 18 0 18 3L18 15L21 4C22 2 25 3 24 6L22 17L27 9C29 7 32 9 30 11L24 24Q24 28 22 31Z" fill="#f4f4f6" stroke="#3c3f46" strokeWidth="1.500" strokeLinejoin="round" />
        </Small>
      </NavButton>
      <NavButton $after={20} aria-label="Zoom">
        <Small>
          <MagnifierShape cy={12} />
          <path d="M25 5H32M28.500 1V9M25 11H32" stroke="#333" strokeWidth="1.600" />
        </Small>
      </NavButton>
      <NavButton $gap={10} aria-label="Fit">
        <Small>
          <rect x="1" y="2" width="29" height="29" fill="none" stroke="#777" strokeWidth="1.500" strokeDasharray="5 3" />
          <MagnifierShape cy={13} />
        </Small>
        <Caret />
      </NavButton>
    </NavBar>
    <NavBar>
      <NavButton $after={8} aria-label="Display settings">
        <Small>
          <rect x="1" y="1" width="30" height="23" fill="#f4f5f7" stroke="#333" strokeWidth="1.800" />
          <rect x="4" y="4" width="24" height="17" fill="#96b6de" stroke="#243f78" strokeWidth="1.600" />
          <path d="M13 24H19V28L23 30H9L13 28Z" fill="#dde0e6" stroke="#3c424c" strokeWidth="1.200" />
        </Small>
        <Caret />
      </NavButton>
      <NavButton $after={8} aria-label="Grid and snaps">
        <Small>
          <rect x="2" y="2" width="28" height="28" fill="url(#steel)" stroke="#333" strokeWidth="1.800" />
          <path d="M6 2V30M10 2V30M14 2V30M18 2V30M22 2V30M26 2V30M2 6H30M2 10H30M2 14H30M2 18H30M2 22H30M2 26H30" stroke="#6c7078" strokeWidth="1" />
        </Small>
        <Caret />
      </NavButton>
      <NavButton aria-label="Viewports">
        <Small>
          <rect x="2" y="4" width="28" height="24" fill="#93b4de" stroke="#2a4a80" strokeWidth="1.600" />
          <path d="M16 4V28M2 16H30" stroke="#2a4a80" strokeWidth="2" />
          <path d="M5 7H13V13H5ZM19 7H27V13H19ZM5 19H13V25H5ZM19 19H27V25H19Z" fill="none" stroke="#6a94cc" strokeWidth="1.500" />
        </Small>
        <Caret />
      </NavButton>
    </NavBar>
  </NavBars>
);

/* ---------- timeline ---------- */

const transport: [string, string][] = [
  ["Go to start", "M2 2H6V30H2ZM26 2V30L7 16Z"],
  ["Step back", "M1 16L19 3V29ZM21 10H25V22H21Z"],
  ["Play", "M2 0L26 16L2 32Z"],
  ["Step forward", "M1 10H5V22H1ZM7 3L26 16L7 29Z"],
  ["Go to end", "M2 2V30L21 16ZM22 2H26V30H22Z"],
];

const CopyFeature = () => (
  <Small>
    <rect x="1" y="1" width="13" height="15" rx="5" fill="#fff" stroke="#444" strokeWidth="2" />
    <path d="M5 9H10V15H5Z" fill="#ccc" />
    <rect x="17" y="15" width="14" height="16" rx="5" fill="#fff" stroke="#444" strokeWidth="2" />
    <path d="M21 23H27V30H21Z" fill="#ccc" />
    <path d="M2 19V26H7V29L13 25L7 20V23H5V19Z" fill="#0b6fc8" />
  </Small>
);

const TimelineBar = () => (
  <Timeline>
    <Transport>
      {transport.map(([label, d]) => (
        <TransportButton key={label} aria-label={label}>
          <svg width="28" height="32" viewBox="0 0 28 32">
            <path d={d} fill="currentColor" />
          </svg>
        </TransportButton>
      ))}
    </Transport>
    <History>
      <Feature aria-label="Sketch1">
        <Small>
          <rect x="1" y="1" width="30" height="30" fill="#e3f0fa" stroke="#000" strokeWidth="2" />
          <path d="M7 6V25H26M7 25L16 16" fill="none" stroke="#111" strokeWidth="2.500" />
          <Pencil x={10} y={21} scale={0.8} />
        </Small>
      </Feature>
      <Feature $selected aria-label="Flange1">
        <svg width="32" height="32" viewBox="10 13 59 54">
          <FlangeShape />
        </svg>
      </Feature>
      <Feature aria-label="Copy1">
        <CopyFeature />
      </Feature>
      <Feature aria-label="Copy2">
        <CopyFeature />
      </Feature>
      <Feature aria-label="Move1">
        <Small>
          <path d="M16 0L22 6H18V10H14V6H10ZM16 32L22 26H18V22H14V26H10ZM0 16L6 10V14H10V18H6V22ZM32 16L26 10V14H22V18H26V22Z" fill="#484848" />
          <circle cx="16" cy="16" r="3.500" fill="#fff" stroke="#484848" strokeWidth="2" />
        </Small>
      </Feature>
      <Track>
        <Tick />
        <Tick />
        <Tick />
        <Tick />
        <Tick />
      </Track>
      <Marker width="24" height="64" viewBox="0 0 24 64" aria-label="Timeline marker">
        <path d="M0 0H24V9L14 18V64H10V18L0 9Z" fill="#666" />
      </Marker>
    </History>
    <SettingsButton aria-label="Timeline settings">
      <svg width="32" height="32" viewBox="-16 -16 32 32">
        <g fill="#5f5f5f">
          {[0, 45, 90, 135].map((a) => (
            <rect key={a} x="-3" y="-16" width="6" height="32" rx="1" transform={`rotate(${a})`} />
          ))}
          <circle r="12" />
        </g>
        <circle r="6" fill="#5f5f5f" stroke="#ccc" strokeWidth="3" />
      </svg>
    </SettingsButton>
  </Timeline>
);

const DenimTexture = () => (
  <Denim aria-hidden="true">
    <defs>
      <filter id="weave" x="0" y="0" width="100%" height="100%">
        <feTurbulence type="fractalNoise" baseFrequency=".3 .12" numOctaves="3" seed="8" />
        <feColorMatrix values="0 0 0 0 .6  0 0 0 0 .63  0 0 0 0 .65  .9 0 0 0 -.42" />
      </filter>
      <pattern id="stitches" x="116" y="0" width="168" height="16" patternUnits="userSpaceOnUse">
        <rect width="3" height="11" fill="#8d8a82" />
      </pattern>
    </defs>
    <rect width="100%" height="100%" filter="url(#weave)" />
    <rect width="100%" height="100%" fill="url(#stitches)" />
  </Denim>
);

export default function App() {
  return (
    <>
      <GlobalStyle />
      <Gradients />
      <Desktop>
        <DenimTexture />
        <DesktopKnob />
        <SystemMenu />
        <WindowFrame>
          <TitleBar>
            <TrafficLights>
              <Light aria-label="Close" />
              <Light aria-label="Minimize" />
              <Light aria-label="Full screen" />
            </TrafficLights>
            <WindowTitle>Autodesk Fusion 360</WindowTitle>
          </TitleBar>
          <QuickToolbar />
          <DocumentTabs />
          <Canvas>
            <Model />
            <RibbonBar />
            <PanelBar>
              <PanelFold aria-label="Fold browser">
                <svg width="20" height="14" viewBox="0 0 20 14">
                  <path d="M0 7L10 0V14ZM10 7L20 0V14Z" fill="#333" />
                </svg>
              </PanelFold>
              <PanelTitle>BROWSER</PanelTitle>
              <button aria-label="Collapse browser">
                <svg width="16" height="16" viewBox="0 0 16 16">
                  <rect width="16" height="16" rx="6" fill="#333" />
                  <path d="M3 8H13" stroke="#ddd" strokeWidth="2" />
                </svg>
              </button>
              <PanelGrip />
            </PanelBar>
            <BrowserTree />
            <PanelBar $bottom>
              <PanelFold aria-label="Fold comments" />
              <PanelTitle>COMMENTS</PanelTitle>
              <button aria-label="Expand comments">
                <svg width="16" height="16" viewBox="0 0 16 16">
                  <rect width="16" height="16" rx="6" fill="#333" />
                  <path d="M2 8H14M8 2V14" stroke="#ddd" strokeWidth="2" />
                </svg>
              </button>
              <PanelGrip />
            </PanelBar>
            <Cube />
            <NavigationBars />
          </Canvas>
          <TimelineBar />
        </WindowFrame>
      </Desktop>
    </>
  );
}
